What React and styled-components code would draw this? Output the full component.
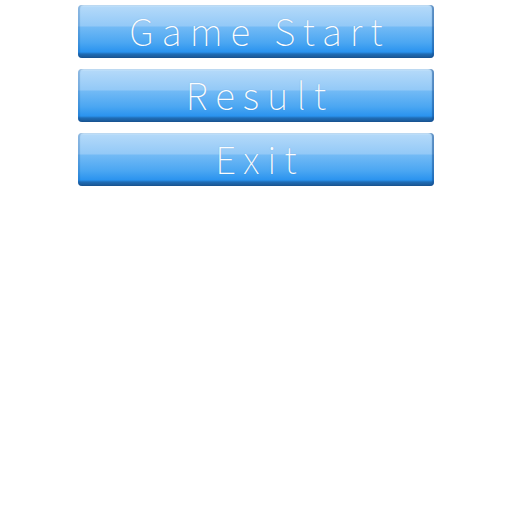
import React from 'react';
import styled, { createGlobalStyle } from 'styled-components';

const GlobalStyle = createGlobalStyle`
  html, body {
    margin: 0;
    padding: 0;
    background: #ffffff;
  }
`;

const Menu = styled.div`
  display: flex;
  flex-direction: column;
  gap: 11px;
  width: 356px;
  margin: 5px 0 0 78px;
`;

const MenuButton = styled.button`
  display: flex;
  align-items: center;
  justify-content: center;
  height: 53px;
  padding: 0 0 3px 8px;
  border: none;
  border-radius: 4px;
  background: linear-gradient(
    to bottom,
    #d3eafb 0px,
    #b3d9f9 2px,
    #93c9f7 21px,
    #72baf5 22px,
    #4aa6f2 38px,
    #2a93ef 47px,
    #1f6db6 49px,
    #1a5490 53px
  );
  box-shadow: inset -2px 0 1px rgba(20, 80, 150, 0.55), inset 2px 0 1px rgba(20, 80, 150, 0.25);
  font-family: 'Noto Sans CJK JP', 'Noto Sans', sans-serif;
  font-weight: 100;
  font-size: 37px;
  letter-spacing: 8px;
  color: #fbfdff;
  text-shadow: 0 0 1px rgba(40, 90, 150, 0.35);
  cursor: pointer;
`;

const items = ['Game Start', 'Result', 'Exit'];

const App = () => {
  return (
    <>
      <GlobalStyle />
      <Menu>
        {items.map((label) => (
          <MenuButton key={label}>{label}</MenuButton>
        ))}
      </Menu>
    </>
  );
};

export default App;
